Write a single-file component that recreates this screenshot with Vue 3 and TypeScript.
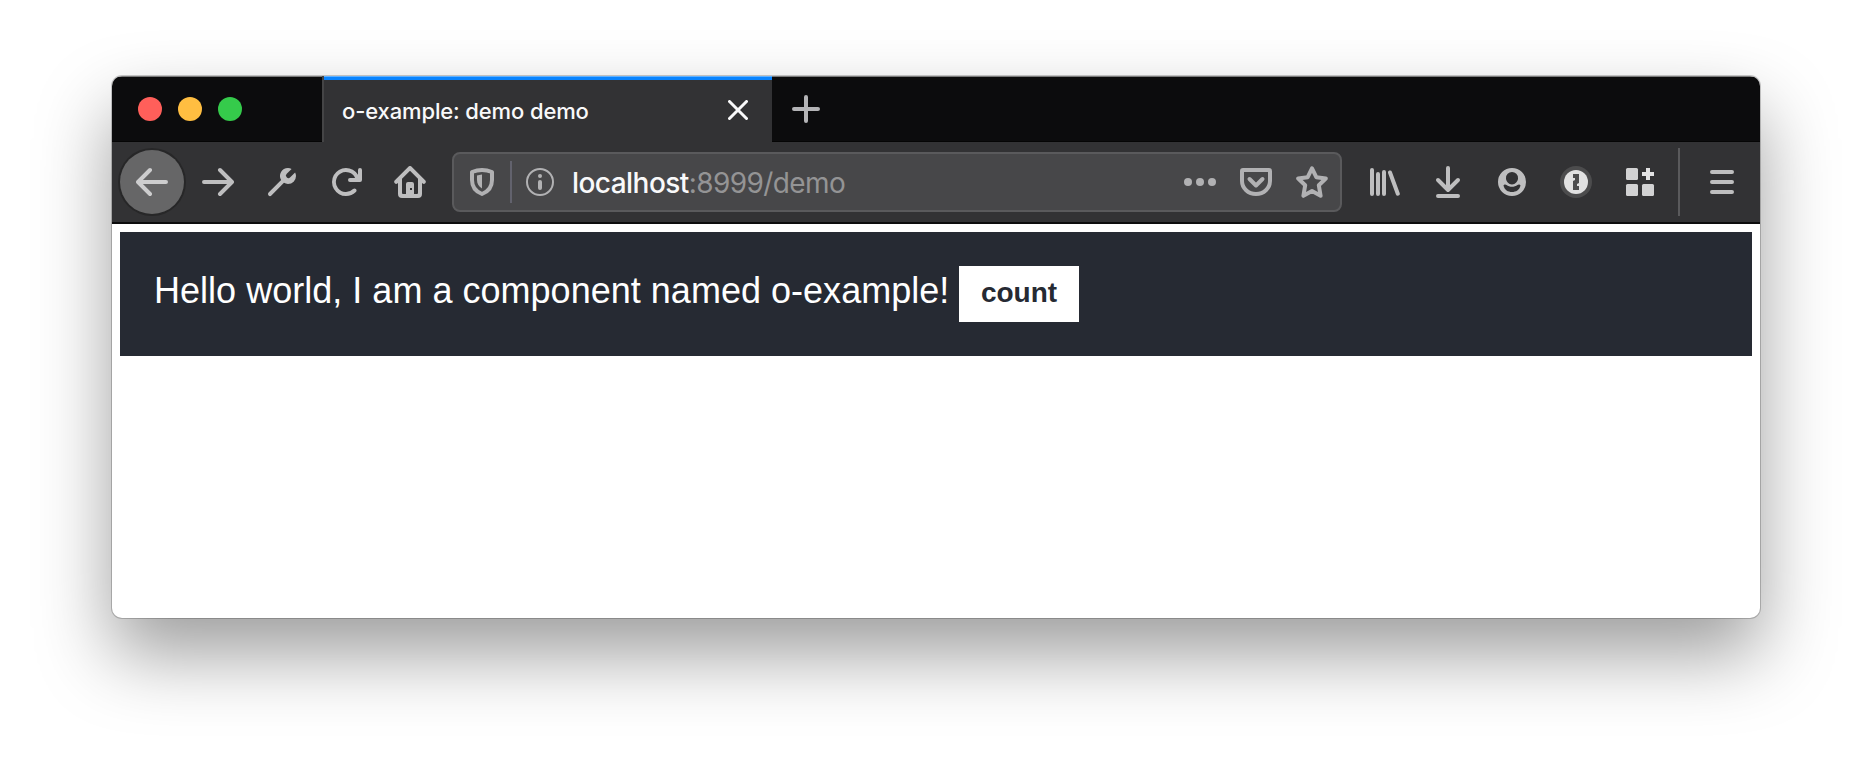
<script setup lang="ts">
import { ref } from 'vue'

const count = ref<number>(0)
const lights: string[] = ['red', 'yellow', 'green']
</script>

<template>
  <div class="desktop">
    <div class="window">
      <div class="tabstrip">
        <div class="lights">
          <span v-for="l in lights" :key="l" class="light" :class="l"></span>
        </div>
        <div class="tab">
          <span class="tab-title">o-example: demo demo</span>
          <svg class="close" viewBox="0 0 20 20"><path d="M1.5 1.5l17 17M18.5 1.5l-17 17" /></svg>
        </div>
        <svg class="newtab" viewBox="0 0 28 28"><path d="M14 2v24M2 14h24" /></svg>
      </div>

      <div class="toolbar">
        <div class="back">
          <svg class="icon line" viewBox="0 0 32 32"><path d="M30 16H2.5M14 4L2 16l12 12" /></svg>
        </div>
        <div class="slot first">
          <svg class="icon line" viewBox="0 0 32 32"><path d="M2 16h27.500M18 4l12 12-12 12" /></svg>
        </div>
        <div class="slot">
          <svg class="icon" viewBox="0 0 16 16">
            <path d="M14.555 3.2l-2.434 2.436a1.243 1.243 0 1 1-1.757-1.757L12.8 1.445A3.956 3.956 0 0 0 11 1a3.976 3.976 0 0 0-3.434 6.02l-6.273 6.273a1 1 0 1 0 1.414 1.414L8.98 8.434A3.96 3.96 0 0 0 11 9a4 4 0 0 0 4-4 3.956 3.956 0 0 0-.445-1.8z" />
          </svg>
        </div>
        <div class="slot">
          <svg class="icon" viewBox="0 0 16 16">
            <path d="M15 1a1 1 0 0 0-1 1v2.418A6.995 6.995 0 1 0 8 15a6.954 6.954 0 0 0 4.95-2.05 1 1 0 0 0-1.414-1.414A5.019 5.019 0 1 1 12.549 6H10a1 1 0 0 0 0 2h5a1 1 0 0 0 1-1V2a1 1 0 0 0-1-1z" />
          </svg>
        </div>
        <div class="slot">
          <svg class="icon" viewBox="0 0 32 32">
            <path fill-rule="evenodd" d="M31.4 14.600l-14-14a2 2 0 0 0-2.800 0l-14 14a2 2 0 0 0 2.800 2.800L4 16.800V28a4 4 0 0 0 4 4h16a4 4 0 0 0 4-4V16.800l.6.6a2 2 0 0 0 2.800-2.800zM24 27a1 1 0 0 1-1 1h-3V18a2 2 0 0 0-2-2h-4a2 2 0 0 0-2 2v10H9a1 1 0 0 1-1-1V12.800l8-8 8 8zM16 22h2v2h-2z" />
          </svg>
        </div>

        <div class="urlbar">
          <svg class="shield" viewBox="0 0 24 28">
            <path class="shield-line" d="M12 2C8.500 2 5.500 2.600 2 4v8c0 6.500 3.500 11.500 10 14 6.500-2.500 10-7.500 10-14V4C18.500 2.600 15.500 2 12 2z" />
            <path class="solid" d="M12 6.500V20.500C8.500 18.300 7 15.500 7 12V7.600C8.500 7 10 6.700 12 6.500z" />
          </svg>
          <span class="divider"></span>
          <svg class="info" viewBox="0 0 28 28">
            <circle class="ring" cx="14" cy="14" r="13" />
            <circle class="solid" cx="14" cy="8" r="2" />
            <rect class="solid" x="12" y="12" width="4" height="10" rx="2" />
          </svg>
          <span class="url"><span class="host">localhost</span>:8999/demo</span>
          <svg class="icon act" viewBox="0 0 32 32">
            <circle cx="4" cy="16" r="4" /><circle cx="16" cy="16" r="4" /><circle cx="28" cy="16" r="4" />
          </svg>
          <svg class="icon line act" viewBox="0 0 32 32">
            <path d="M3 4h26a1 1 0 0 1 1 1v10a14 13 0 0 1-28 0V5a1 1 0 0 1 1-1z" /><path d="M9.500 13l6.500 6.500 6.500-6.500" />
          </svg>
          <svg class="icon line act" viewBox="0 0 32 32">
            <path class="star" d="M16 2.300l4.300 8.900 9.500 1.300-7 6.700 1.800 10.600L16 25l-8.600 4.800 1.800-10.600-7-6.700 9.500-1.300z" />
          </svg>
        </div>

        <div class="slot">
          <svg class="icon line" viewBox="0 0 32 32"><path d="M4 4v24M10 8v20M16 6v22M22 6.500l7.800 21.200" /></svg>
        </div>
        <div class="slot">
          <svg class="icon line" viewBox="0 0 32 32"><path d="M16 2v22M6 14l10 10 10-10M6 30h20" /></svg>
        </div>
        <div class="slot">
          <svg class="icon" viewBox="0 0 32 32">
            <path fill-rule="evenodd" d="M16 2a14 14 0 1 0 0 28 14 14 0 0 0 0-28zM16 6a6 6 0 0 1 6 6.300c0 3.200-2.700 6.200-6 6.200s-6-3-6-6.200A6 6 0 0 1 16 6zM7.500 19.500c.8-1.500 2.200-1.200 3-.6 3 2.400 8 2.400 11 0 .8-.6 2.200-.9 3 .6C23.500 24 20 26 16 26s-7.500-2-8.500-6.500z" />
          </svg>
        </div>
        <div class="slot">
          <svg class="icon" viewBox="0 0 32 32">
            <circle class="halo" cx="16" cy="16" r="16" /><circle class="disc" cx="16" cy="16" r="12" />
            <path class="keyhole" d="M13 8h6v9l-2 1v2h2v4h-6v-9l2-1v-2h-2z" />
          </svg>
        </div>
        <div class="slot">
          <svg class="icon ext" viewBox="0 0 32 32">
            <rect x="2" y="2" width="12" height="12" rx="1.500" /><rect x="2" y="18" width="12" height="12" rx="1.500" />
            <rect x="18" y="18" width="12" height="12" rx="1.500" /><path class="plus" d="M22 2h4v4h4v4h-4v4h-4v-4h-4V6h4z" />
          </svg>
        </div>
        <span class="separator"></span>
        <div class="slot">
          <svg class="icon line" viewBox="0 0 32 32"><path d="M6 6h20M6 16h20M6 26h20" /></svg>
        </div>
      </div>

      <div class="page">
        <div class="example">
          <span class="hello">Hello world, I am a component named o-example!</span>
          <button class="count" type="button" @click="count++">count</button>
        </div>
      </div>
    </div>
  </div>
</template>

<style>
body {
  margin: 0;
  background: #fff;
}
</style>

<style scoped>
.desktop {
  box-sizing: border-box;
  width: 1872px;
  height: 766px;
  padding: 76px 112px 148px;
  overflow: hidden;
  background: #fff;
}
.window {
  height: 542px;
  border-radius: 10px;
  overflow: hidden;
  background: #fff;
  box-shadow: 0 0 0 1px rgba(0, 0, 0, 0.2), 0 36px 74px rgba(0, 0, 0, 0.39);
}
.tabstrip {
  box-sizing: border-box;
  display: flex;
  align-items: stretch;
  height: 66px;
  background: linear-gradient(#7a7a7a 1px, #0c0c0d 1px, #0c0c0d 65px, #050505 65px);
}
.lights {
  box-sizing: border-box;
  display: flex;
  gap: 16px;
  width: 210px;
  padding: 21px 0 0 26px;
}
.light {
  width: 24px;
  height: 24px;
  border-radius: 50%;
}
.red { background: #ff5f5a; }
.yellow { background: #ffbe41; }
.green { background: #35cb4b; }
.tab {
  box-sizing: border-box;
  display: flex;
  align-items: center;
  justify-content: space-between;
  width: 450px;
  padding: 1px 24px 0 18px;
  border-left: 2px solid #454546;
  background: linear-gradient(#62b2ff 1px, #0a84ff 1px, #0a84ff 4px, #323234 4px);
}
.tab-title {
  color: #f9f9fa;
  font: 500 22px/30px Inter, "Liberation Sans", sans-serif;
  letter-spacing: -0.13px;
  padding-top: 3px;
}
.close {
  width: 20px;
  height: 20px;
  fill: none;
  stroke: #f9f9fa;
  stroke-width: 3;
  stroke-linecap: round;
}
.newtab {
  width: 28px;
  height: 28px;
  margin: 19px 0 0 20px;
  fill: none;
  stroke: #b4b4b6;
  stroke-width: 4;
  stroke-linecap: round;
}
.toolbar {
  box-sizing: border-box;
  display: flex;
  align-items: center;
  height: 82px;
  padding-left: 8px;
  background: #323234;
  border-bottom: 2px solid #0c0c0d;
}
.back {
  display: flex;
  align-items: center;
  justify-content: center;
  width: 64px;
  height: 64px;
  border-radius: 50%;
  background: #666667;
  box-shadow: 0 0 0 2px #272728;
}
.slot {
  display: flex;
  align-items: center;
  justify-content: center;
  width: 64px;
  flex: none;
}
.first {
  margin-left: 2px;
}
.icon {
  width: 32px;
  height: 32px;
  flex: none;
  fill: #bebebf;
}
.line {
  fill: none;
  stroke: #bebebf;
  stroke-width: 4;
  stroke-linecap: round;
  stroke-linejoin: round;
}
.back .line {
  stroke: #cdcdce;
}
.urlbar {
  box-sizing: border-box;
  display: flex;
  align-items: center;
  width: 890px;
  height: 60px;
  margin: 0 10px;
  padding: 0 12px 0 16px;
  border: 2px solid #5a5a5c;
  border-radius: 8px;
  background: #474749;
}
.shield {
  width: 24px;
  height: 28px;
}
.shield-line {
  fill: none;
  stroke: #b1b1b3;
  stroke-width: 4;
  stroke-linejoin: round;
}
.solid { fill: #b1b1b3; }
.ring {
  fill: none;
  stroke: #b1b1b3;
  stroke-width: 2;
}
.divider {
  width: 2px;
  height: 42px;
  margin: 0 14px 0 16px;
  background: #62626d;
}
.info {
  width: 28px;
  height: 28px;
}
.url {
  flex: 1;
  padding: 2px 0 0 18px;
  color: #949495;
  font: 400 28px/36px Inter, "Liberation Sans", sans-serif;
  letter-spacing: -0.6px;
}
.host {
  color: #f9f9fa;
  font-weight: 500;
  letter-spacing: -0.55px;
}
.act {
  margin-left: 24px;
  fill: #b1b1b3;
}
.line.act {
  fill: none;
  stroke: #b1b1b3;
}
.halo { fill: #4c4c4d; }
.disc { fill: #e1e1e1; }
.keyhole { fill: #4c4c4d; }
.ext { fill: #d2d2d3; }
.plus { fill: #e2e2e3; }
.separator {
  width: 2px;
  height: 68px;
  margin: 0 10px 0 6px;
  background: #5a5a5c;
}
.page {
  padding: 8px;
}
.example {
  display: flex;
  align-items: flex-start;
  padding: 34px;
  background: #262a33;
}
.hello {
  width: 805px;
  padding-top: 4px;
  color: #fff;
  font: 400 36px/42px "Liberation Sans", Arial, sans-serif;
  letter-spacing: 0.02px;
  white-space: nowrap;
}
.count {
  box-sizing: border-box;
  width: 120px;
  height: 56px;
  padding: 0 0 3px;
  border: 0;
  background: #fff;
  color: #262a33;
  font: 700 28px/33px "Liberation Sans", Arial, sans-serif;
}
</style>
